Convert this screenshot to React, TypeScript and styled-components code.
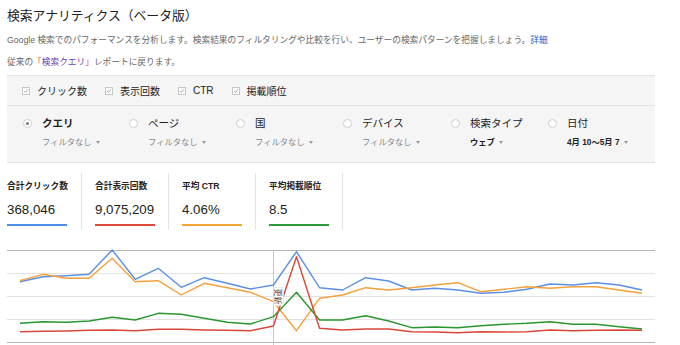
import React from 'react'
import styled, { createGlobalStyle } from 'styled-components'

const GlobalStyle = createGlobalStyle`
  body {
    margin: 0;
    background: #fff;
    font-family: 'Liberation Sans', 'Noto Sans CJK JP', sans-serif;
    color: #222;
  }
`

const checks = ['クリック数', '表示回数', 'CTR', '掲載順位']

const dimensions = [
  { label: 'クエリ', filter: 'フィルタなし', checked: true, bold: true },
  { label: 'ページ', filter: 'フィルタなし' },
  { label: '国', filter: 'フィルタなし' },
  { label: 'デバイス', filter: 'フィルタなし' },
  { label: '検索タイプ', filter: 'ウェブ', strong: true },
  { label: '日付', filter: '4月 10〜5月 7', strong: true },
]

const stats = [
  { label: '合計クリック数', value: '368,046', color: '#4d8fe8' },
  { label: '合計表示回数', value: '9,075,209', color: '#dd4b39' },
  { label: '平均 CTR', value: '4.06%', color: '#f4a43a' },
  { label: '平均掲載順位', value: '8.5', color: '#2b9b3a' },
]

// y values read off the graph, in page pixels (28 days)
const series = [
  {
    color: '#5b8fe6',
    ys: [281.7, 276.7, 275.7, 274.3, 250, 279.3, 268.3, 287.3, 277.7, 283.3, 289, 285, 251.7, 287.7,
      290, 277.7, 281, 290, 288.3, 290, 293.3, 292.3, 289.3, 284, 285, 282.7, 285, 290],
  },
  {
    color: '#f5a03c',
    ys: [280.7, 274.3, 278.3, 278.3, 258.3, 281.7, 280.7, 295, 283.3, 287.7, 292.3, 301.7, 330.7, 298.3,
      295, 287.7, 290, 287.7, 285, 282.7, 291.7, 289.3, 286.7, 288.3, 286.7, 286.7, 290, 293.3],
  },
  {
    color: '#2a962f',
    ys: [323.3, 321.7, 322.3, 321, 317.3, 320, 313.3, 314.3, 318.3, 322.3, 324, 316.7, 292.3, 320,
      320, 315.7, 321, 327.7, 327, 327.7, 325.7, 324.3, 323.3, 321.7, 324.3, 324.3, 326.7, 329],
  },
  {
    color: '#d9473a',
    ys: [331.7, 331.3, 331, 330.3, 330, 330.7, 329.3, 329.3, 330, 330.3, 330.7, 326, 256.7, 328.3,
      330, 329, 329, 331.7, 332, 332.7, 331.7, 332, 331.7, 330, 330.7, 330.3, 330, 330.3],
  },
]

const xAt = (i: number) => 20 + i * 23.04

const App: React.FC = () => {
  return (
    <Page>
      <GlobalStyle />
      <Title>検索アナリティクス（ベータ版）</Title>
      <Intro>
        <Desc>
          Google 検索でのパフォーマンスを分析します。検索結果のフィルタリングや比較を行い、ユーザーの検索パターンを把握しましょう。
          <Link>詳細</Link>
        </Desc>
        <Desc>
          従来の<Bracket>「</Bracket><Visited>検索クエリ</Visited><Bracket>」</Bracket>レポートに戻ります。
        </Desc>
      </Intro>

      <Panel>
        <CheckRow>
          {checks.map((c) => (
            <CheckItem key={c}>
              <CheckBox>
                <svg width="8" height="8" viewBox="0 0 8 8">
                  <path d="M1.5 4.2 L3.2 6 L6.6 1.8" fill="none" stroke="#888" strokeWidth="1" />
                </svg>
              </CheckBox>
              {c}
            </CheckItem>
          ))}
        </CheckRow>
        <RadioRow>
          {dimensions.map((d) => (
            <Dimension key={d.label}>
              <Radio checked={!!d.checked} />
              <div>
                <DimLabel bold={!!d.bold}>{d.label}</DimLabel>
                <Filter strong={!!d.strong}>
                  {d.filter}
                  <Caret />
                </Filter>
              </div>
            </Dimension>
          ))}
        </RadioRow>
      </Panel>

      <StatsRow>
        {stats.map((s, i) => (
          <Stat key={s.label} first={i === 0}>
            <StatLabel>{s.label}</StatLabel>
            <StatValue>{s.value}</StatValue>
            <StatBar color={s.color} />
          </Stat>
        ))}
      </StatsRow>

      <Chart>
        <svg width="648" height="105" viewBox="7 240 648 105">
          <line x1="7" x2="655" y1="250.5" y2="250.5" stroke="#b5b5b5" />
          <line x1="7" x2="655" y1="273.5" y2="273.5" stroke="#e2e2e2" />
          <line x1="7" x2="655" y1="296.5" y2="296.5" stroke="#e2e2e2" />
          <line x1="7" x2="655" y1="319.5" y2="319.5" stroke="#e2e2e2" />
          <line x1="7" x2="655" y1="342.5" y2="342.5" stroke="#b5b5b5" />
          <line x1="273.5" x2="273.5" y1="250" y2="345" stroke="#c8c8c8" />
          {series.map((s) => (
            <polyline
              key={s.color}
              points={s.ys.map((y, i) => `${xAt(i)},${y}`).join(' ')}
              fill="none"
              stroke={s.color}
              strokeWidth="1.4"
              strokeLinejoin="round"
            />
          ))}
          <g transform="translate(278.5,296.5) rotate(90)">
            <rect x="-9" y="-5" width="18" height="10" fill="#fff" stroke="#ddd" strokeWidth="0.5" />
            <text
              x="0"
              y="0.5"
              textAnchor="middle"
              dominantBaseline="central"
              fontSize="8"
              fill="#444"
              fontFamily="'Noto Sans CJK JP', sans-serif"
            >
              更新
            </text>
          </g>
        </svg>
      </Chart>
    </Page>
  )
}

const Page = styled.div`
  padding: 6px 7px 0;
  width: 666px;
`

const Title = styled.h1`
  margin: 0;
  font-size: 12.8px;
  line-height: 20px;
  font-weight: 400;
  color: #222;
`

const Intro = styled.div`
  margin-top: 3px;
`

const Desc = styled.div`
  font-size: 8.7px;
  line-height: 22px;
  color: #666;
  white-space: nowrap;
`

const Link = styled.span`
  color: #1a5ccc;
`

const Visited = styled.span`
  color: #6a3fb5;
`

const Bracket = styled.span`
  color: #dd4b39;
`

const Panel = styled.div`
  margin-top: 2px;
  width: 648px;
  background: #f5f5f5;
  border-top: 1px solid #e3e3e3;
  border-bottom: 1px solid #e3e3e3;
`

const CheckRow = styled.div`
  display: flex;
  align-items: center;
  gap: 18px;
  height: 29px;
  padding-left: 15px;
  border-bottom: 1px solid #e3e3e3;
`

const CheckItem = styled.div`
  display: flex;
  align-items: center;
  gap: 7px;
  font-size: 10px;
  color: #222;
`

const CheckBox = styled.span`
  display: flex;
  align-items: center;
  justify-content: center;
  width: 8px;
  height: 8px;
  border: 1px solid #c8c8c8;
  background: #fff;
  box-sizing: border-box;
`

const RadioRow = styled.div`
  display: grid;
  grid-template-columns: 106px 107px 107px 108px 97px 1fr;
  padding: 9px 0 13px 16px;
`

const Dimension = styled.div`
  display: flex;
  align-items: flex-start;
  gap: 10px;
`

const Radio = styled.span<{ checked: boolean }>`
  position: relative;
  margin-top: 4px;
  width: 9px;
  height: 9px;
  border-radius: 50%;
  border: 1px solid #cfcfcf;
  background: #fff;
  box-sizing: border-box;
  &::after {
    content: '';
    display: ${(p) => (p.checked ? 'block' : 'none')};
    position: absolute;
    left: 2px;
    top: 2px;
    width: 3px;
    height: 3px;
    border-radius: 50%;
    background: #777;
  }
`

const DimLabel = styled.div<{ bold: boolean }>`
  font-size: 10.5px;
  line-height: 16px;
  color: #222;
  font-weight: ${(p) => (p.bold ? 700 : 400)};
`

const Filter = styled.div<{ strong: boolean }>`
  display: flex;
  align-items: center;
  margin-top: 4px;
  font-size: 8.3px;
  line-height: 14px;
  white-space: nowrap;
  color: ${(p) => (p.strong ? '#222' : '#888')};
  font-weight: ${(p) => (p.strong ? 700 : 400)};
`

const Caret = styled.span`
  margin-left: 4px;
  width: 0;
  height: 0;
  border-left: 2.5px solid transparent;
  border-right: 2.5px solid transparent;
  border-top: 3px solid #999;
`

const StatsRow = styled.div`
  display: flex;
  margin-top: 10px;
`

const Stat = styled.div<{ first: boolean }>`
  width: 60px;
  padding: 7px 13px 4px ${(p) => (p.first ? '0' : '13px')};
  padding-right: ${(p) => (p.first ? '14px' : '13px')};
  border-right: 1px solid #e3e3e3;
`

const StatLabel = styled.div`
  font-size: 8.7px;
  line-height: 12px;
  font-weight: 700;
  color: #222;
  white-space: nowrap;
`

const StatValue = styled.div`
  margin-top: 9px;
  font-size: 13.3px;
  line-height: 18px;
  color: #222;
`

const StatBar = styled.div<{ color: string }>`
  margin-top: 5px;
  height: 2px;
  background: ${(p) => p.color};
`

const Chart = styled.div`
  margin-top: 10px;
  line-height: 0;
`

export default App
